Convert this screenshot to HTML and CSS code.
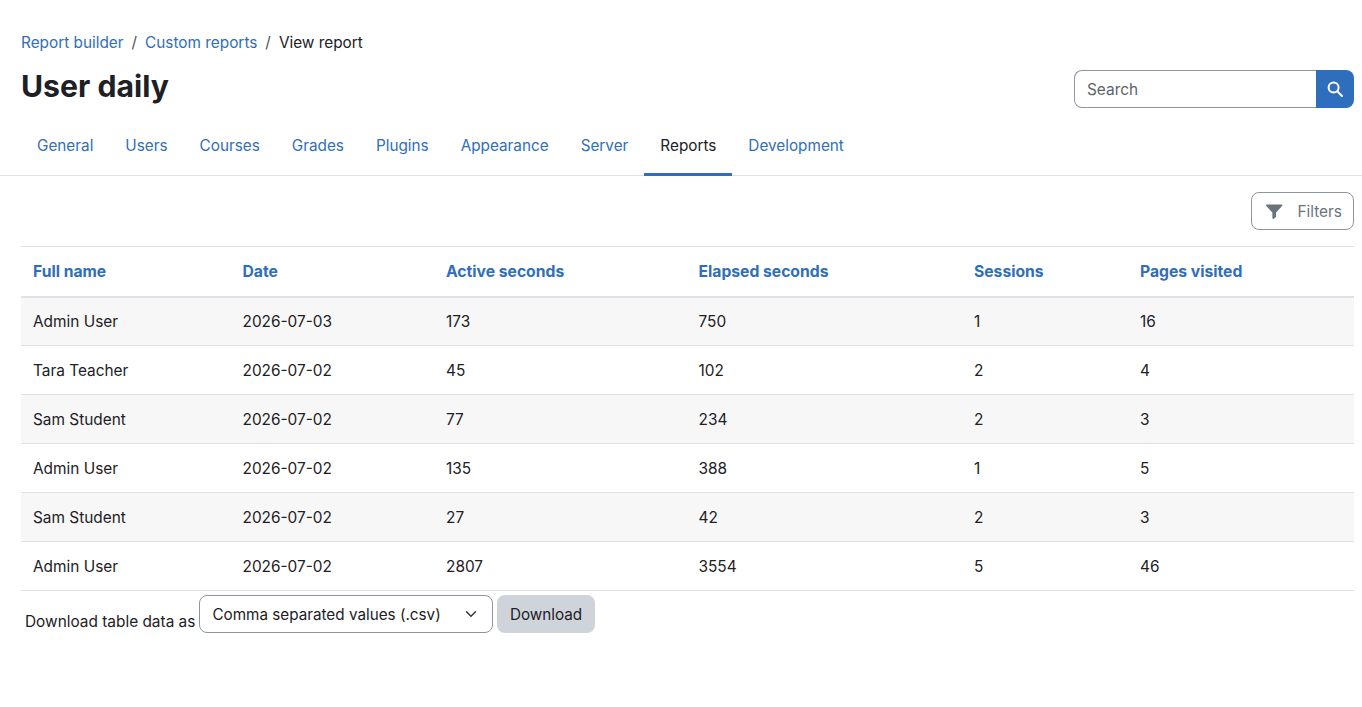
FILE: index.html
```html
<!DOCTYPE html>
<html lang="en">
<head>
<meta charset="UTF-8">
<title>User daily</title>
<link rel="stylesheet" href="styles.css">
</head>
<body>

<header class="page-header">
    <div class="header-left">
        <nav class="breadcrumb">
            <a href="#">Report builder</a>
            <span class="crumb-sep">/</span>
            <a href="#">Custom reports</a>
            <span class="crumb-sep">/</span>
            <span>View report</span>
        </nav>
        <h1>User daily</h1>
    </div>
    <form class="search">
        <input type="text" class="search-input" placeholder="Search">
        <button type="button" class="search-button">
            <svg width="16" height="16" viewBox="0 0 16 16" fill="none" stroke="#fff" stroke-width="2">
                <circle cx="6.6" cy="6.6" r="5"/>
                <path d="M10.4 10.4L15 15" stroke-linecap="round"/>
            </svg>
        </button>
    </form>
</header>

<nav class="tabs">
    <a href="#">General</a>
    <a href="#">Users</a>
    <a href="#">Courses</a>
    <a href="#">Grades</a>
    <a href="#">Plugins</a>
    <a href="#">Appearance</a>
    <a href="#">Server</a>
    <a href="#" class="active">Reports</a>
    <a href="#">Development</a>
</nav>

<main class="content">
    <div class="filters-row">
        <button class="filters-button">
            <svg width="17" height="17" viewBox="0 0 16 16" fill="#6a737b">
                <path d="M0.6 1.5C0.3 1.5 0 1.8 0 2.2c0 .2.1.3.2.5L6 9v5.2c0 .5.4.8.8.8.2 0 .4-.1.5-.2l1.8-1.4c.3-.2.4-.5.4-.8V9l5.8-6.3c.1-.2.2-.3.2-.5 0-.4-.3-.7-.6-.7z"/>
            </svg>
            <span>Filters</span>
        </button>
    </div>

    <table class="report">
        <thead>
            <tr>
                <th class="col-name">Full name</th>
                <th class="col-date">Date</th>
                <th class="col-active">Active seconds</th>
                <th class="col-elapsed">Elapsed seconds</th>
                <th class="col-sessions">Sessions</th>
                <th>Pages visited</th>
            </tr>
        </thead>
        <tbody>
            <tr><td>Admin User</td><td>2026-07-03</td><td>173</td><td>750</td><td>1</td><td>16</td></tr>
            <tr><td>Tara Teacher</td><td>2026-07-02</td><td>45</td><td>102</td><td>2</td><td>4</td></tr>
            <tr><td>Sam Student</td><td>2026-07-02</td><td>77</td><td>234</td><td>2</td><td>3</td></tr>
            <tr><td>Admin User</td><td>2026-07-02</td><td>135</td><td>388</td><td>1</td><td>5</td></tr>
            <tr><td>Sam Student</td><td>2026-07-02</td><td>27</td><td>42</td><td>2</td><td>3</td></tr>
            <tr><td>Admin User</td><td>2026-07-02</td><td>2807</td><td>3554</td><td>5</td><td>46</td></tr>
        </tbody>
    </table>

    <form class="download">
        <label class="download-label">Download table data as</label>
        <div class="select-box">
            <span>Comma separated values (.csv)</span>
            <svg width="12" height="12" viewBox="0 0 16 16" fill="none" stroke="#343a40" stroke-width="2" stroke-linecap="round" stroke-linejoin="round">
                <path d="M2 5l6 6 6-6"/>
            </svg>
        </div>
        <button type="button" class="download-button">Download</button>
    </form>
</main>

</body>
</html>
```

FILE: styles.css
```css
body {
    font-family: Inter, "Liberation Sans", Arial, sans-serif;
    font-size: 15.4px;
    color: #1d2125;
    background-color: #fff;
    margin: 0;
    padding: 0;
}

a {
    color: #2f6ebd;
    text-decoration: none;
}

.page-header {
    display: flex;
    justify-content: space-between;
    align-items: flex-end;
    padding: 32px 8px 0 21px;
    height: 76px;
}

.breadcrumb {
    display: flex;
    height: 22px;
    line-height: 22px;
    margin-bottom: 14px;
    font-size: 15.35px;
}

.crumb-sep {
    color: #495057;
    margin: 0 8px;
}

h1 {
    font-size: 30.2px;
    font-weight: 700;
    line-height: 36px;
    margin: 0;
    padding-bottom: 4px;
}

.search {
    display: flex;
    width: 280px;
    height: 38px;
}

.search-input {
    flex: 1;
    min-width: 0;
    box-sizing: border-box;
    padding: 0 12px;
    border: 1px solid #8f959e;
    border-right: none;
    border-radius: 8px 0 0 8px;
    font-family: inherit;
    font-size: 15.4px;
    color: #495057;
}

.search-input::placeholder {
    color: #5c636a;
    opacity: 1;
}

.search-button {
    width: 38px;
    border: none;
    padding: 0;
    border-radius: 0 8px 8px 0;
    background-color: #2f6ebd;
    display: flex;
    align-items: center;
    justify-content: center;
}

.tabs {
    display: flex;
    margin-top: 17px;
    padding-left: 21px;
    border-bottom: 1px solid #dee2e6;
    height: 50px;
    font-size: 15.3px;
}

.tabs a {
    padding: 0 16px;
    line-height: 42px;
    height: 51px;
    box-sizing: border-box;
}

.tabs a.active {
    color: #1d2125;
    border-bottom: 3px solid #2f6ebd;
}

.content {
    padding: 16px 8px 0 21px;
}

.filters-row {
    display: flex;
    justify-content: flex-end;
    margin-bottom: 16px;
}

.filters-button {
    display: flex;
    align-items: center;
    gap: 14px;
    height: 38px;
    padding: 0 11px 0 14px;
    background: #fff;
    border: 1px solid #8f959e;
    border-radius: 8px;
    font-family: inherit;
    font-size: 15.4px;
    color: #6a737b;
}

.report {
    width: 100%;
    border-collapse: collapse;
    table-layout: fixed;
    border-top: 1px solid #dee2e6;
}

.report th, .report td {
    box-sizing: border-box;
    padding: 0 12px;
    text-align: left;
}

.report th {
    height: 50px;
    color: #2f6ebd;
    font-size: 15.7px;
    font-weight: 700;
    border-bottom: 2px solid #dee2e6;
}

.report td {
    height: 49px;
    border-bottom: 1px solid #dee2e6;
}

.report tbody tr:nth-child(odd) {
    background-color: #f7f7f7;
}

.col-name { width: 209.5px; }
.col-date { width: 203.5px; }
.col-active { width: 252.5px; }
.col-elapsed { width: 275.5px; }
.col-sessions { width: 166px; }

.download {
    display: flex;
    align-items: flex-start;
    padding: 4px 0 0 4px;
}

.download-label {
    padding-top: 17px;
    line-height: 20px;
    margin-right: 4px;
}

.select-box {
    display: flex;
    align-items: center;
    justify-content: space-between;
    box-sizing: border-box;
    width: 294px;
    height: 38px;
    padding: 0 15px 0 12px;
    border: 1px solid #8f959e;
    border-radius: 8px;
    margin-right: 4px;
    font-size: 15.25px;
}

.download-button {
    height: 38px;
    padding: 0 12.5px;
    border: none;
    border-radius: 8px;
    background-color: #ced4da;
    font-family: inherit;
    font-size: 15.25px;
    color: #1d2125;
}
```
